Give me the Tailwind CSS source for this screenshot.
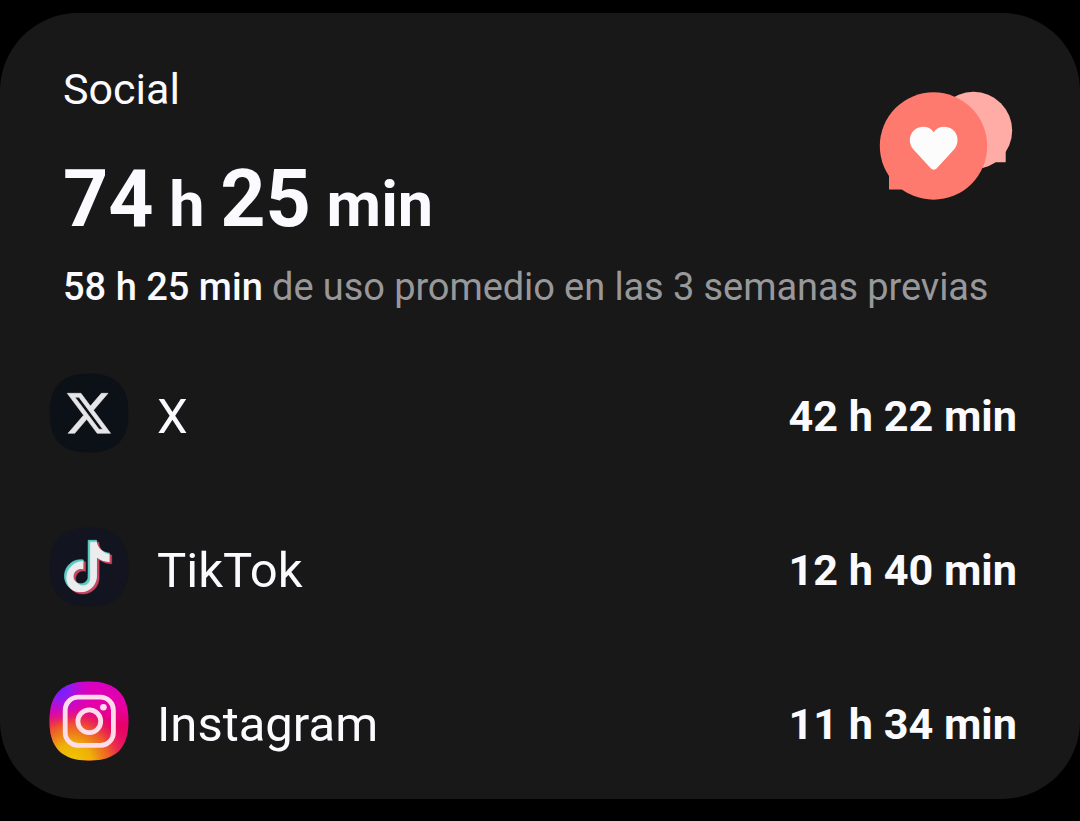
<!DOCTYPE html>
<html lang="es">
<head>
  <meta charset="UTF-8">
  <meta name="viewport" content="width=device-width, initial-scale=1.0">
  <title>Social</title>
  <script src="https://cdn.jsdelivr.net/npm/@tailwindcss/browser@4"></script>
</head>
<body class="bg-black h-screen overflow-hidden pt-[13px] font-['Roboto',sans-serif] text-[#fafaff]">

  <main class="h-[786px] rounded-[78px] bg-[#181818] pl-[49px] pr-[63px] overflow-hidden">

    <!-- Header -->
    <header class="flex justify-between h-[323px] pl-[14px]">
      <div class="pt-[51px] whitespace-nowrap">
        <h1 class="text-[43px] leading-[50px]">Social</h1>
        <p class="mt-[35px] text-[79px] leading-[100px] font-bold">74<span class="text-[63px]"> h </span>25<span class="text-[63px]"> min</span></p>
        <p class="mt-[7px] w-0 text-[38px] leading-[50px] text-[#98989a]"><span class="font-medium text-[#fafaff]">58 h 25 min</span><span class="tracking-[-0.09px]"> de uso promedio en las 3 semanas previas</span></p>
      </div>
      <svg class="mt-[77px] mr-[3px] w-[136px] h-[112px] shrink-0" viewBox="878 90 136 112">
        <circle cx="973.5" cy="130.5" r="38.7" fill="#ffaca6"/>
        <path d="M1005.7 140v22.3H985V140z" fill="#ffaca6"/>
        <circle cx="933.5" cy="146" r="53.7" fill="#ff7a6e"/>
        <path d="M889 165v24.6h25V165z" fill="#ff7a6e"/>
        <path d="M933.7 132.3C929.5 125.5 920.5 125.3 915 129.5C908.5 134.5 908.3 144 913.5 149.5L930.5 168C932.3 170.2 935.2 170.2 937 168L954 149.5C959 144 959 134.5 952.5 129.5C947 125.3 938 125.5 933.7 132.3z" fill="#fcfcfd"/>
      </svg>
    </header>

    <!-- Apps -->
    <ul>
      <li class="flex items-center h-[154px]">
        <svg class="w-[80px] h-[80px]" viewBox="0 0 80 80">
          <path d="M40 .5C67 .5 79.5 13 79.5 40S67 79.5 40 79.5.5 67 .5 40 13 .5 40 .5z" fill="#0c1117"/>
          <path transform="translate(15.7 15.7) scale(2.01 2.05)" d="M18.244 2.25h3.308l-7.227 8.26 8.502 11.24H16.17l-5.214-6.817L4.99 21.75H1.68l7.73-8.835L1.254 2.25H8.08l4.713 6.231zm-1.161 17.52h1.833L7.084 4.126H5.117z" fill="#e6e6e8" stroke="#e6e6e8" stroke-width="0.3"/>
        </svg>
        <span class="ml-[28px] mt-[7px] text-[49px] leading-[60px]">X</span>
        <span class="ml-auto mt-[7px] text-[43.2px] leading-[60px] font-bold">42 h 22 min</span>
      </li>
      <li class="flex items-center h-[154px]">
        <svg class="w-[80px] h-[80px]" viewBox="0 0 80 80">
          <defs>
            <path id="note" d="M12.525.02c1.31-.02 2.61-.01 3.91-.02.08 1.53.63 3.09 1.75 4.17 1.12 1.11 2.7 1.62 4.24 1.79v4.03c-1.44-.05-2.89-.35-4.2-.97-.57-.26-1.1-.59-1.62-.93-.01 2.92.01 5.84-.02 8.75-.08 1.4-.54 2.79-1.35 3.94-1.31 1.92-3.58 3.17-5.91 3.21-1.43.08-2.86-.31-4.08-1.03-2.02-1.19-3.44-3.37-3.65-5.71-.02-.5-.03-1-.01-1.49.18-1.9 1.12-3.72 2.58-4.96 1.66-1.44 3.98-2.13 6.15-1.72.02 1.48-.04 2.96-.04 4.44-.99-.32-2.15-.23-3.02.37-.63.41-1.11 1.04-1.36 1.75-.21.51-.15 1.07-.14 1.61.24 1.64 1.82 3.02 3.5 2.87 1.12-.01 2.19-.66 2.77-1.61.19-.33.4-.67.41-1.06.1-1.79.06-3.57.07-5.36.01-4.03-.01-8.05.02-12.07z"/>
            <clipPath id="overlap"><use href="#note" transform="translate(12.1 13.3) scale(2.16)"/></clipPath>
          </defs>
          <path d="M40 .5C67 .5 79.5 13 79.5 40S67 79.5 40 79.5.5 67 .5 40 13 .5 40 .5z" fill="#12151f"/>
          <use href="#note" transform="translate(12.1 13.3) scale(2.16)" fill="#5accc4" stroke="#5accc4" stroke-width="0.3"/>
          <use href="#note" transform="translate(14.3 15.2) scale(2.16)" fill="#cb4660" stroke="#cb4660" stroke-width="0.2"/>
          <!-- cyan inner edge stays above the red copy -->
          <g clip-path="url(#overlap)">
            <use href="#note" transform="translate(12.1 13.3) scale(2.16)" fill="#5accc4"/>
            <use href="#note" transform="translate(14.3 15.2) scale(2.16)" fill="#ececee" stroke="#ececee" stroke-width="0.3"/>
          </g>
        </svg>
        <span class="ml-[28px] mt-[7px] text-[49px] leading-[60px]">TikTok</span>
        <span class="ml-auto mt-[7px] text-[43.2px] leading-[60px] font-bold">12 h 40 min</span>
      </li>
      <li class="flex items-center h-[154px]">
        <svg class="w-[80px] h-[80px]" viewBox="0 0 80 80">
          <defs>
            <path id="tile" d="M40 .5C67 .5 79.5 13 79.5 40S67 79.5 40 79.5.5 67 .5 40 13 .5 40 .5z"/>
            <linearGradient id="ig-base" x1="0.45" y1="0" x2="0.55" y2="1">
              <stop offset="0" stop-color="#d800c4"/>
              <stop offset="0.35" stop-color="#e600a4"/>
              <stop offset="0.6" stop-color="#e80068"/>
              <stop offset="1" stop-color="#e62060"/>
            </linearGradient>
            <radialGradient id="ig-warm" cx="0.28" cy="1.05" r="0.76">
              <stop offset="0" stop-color="#f0cc00"/>
              <stop offset="0.35" stop-color="#eeb008"/>
              <stop offset="0.66" stop-color="#ee6024" stop-opacity="0.9"/>
              <stop offset="1" stop-color="#ea1060" stop-opacity="0"/>
            </radialGradient>
            <radialGradient id="ig-violet" cx="0.12" cy="0.08" r="0.45">
              <stop offset="0" stop-color="#6a20ff"/>
              <stop offset="0.3" stop-color="#8c1cf4"/>
              <stop offset="1" stop-color="#dc00c4" stop-opacity="0"/>
            </radialGradient>
          </defs>
          <use href="#tile" fill="url(#ig-base)"/>
          <use href="#tile" fill="url(#ig-warm)"/>
          <use href="#tile" fill="url(#ig-violet)"/>
          <g fill="none" stroke="#ffdcea" stroke-width="4.8">
            <rect x="16.2" y="16.2" width="48.2" height="48.2" rx="13"/>
            <circle cx="40.3" cy="40.3" r="11.4"/>
          </g>
          <circle cx="54.4" cy="26.2" r="3.3" fill="#ffdcea"/>
        </svg>
        <span class="ml-[28px] mt-[7px] text-[49px] leading-[60px]">Instagram</span>
        <span class="ml-auto mt-[7px] text-[43.2px] leading-[60px] font-bold">11 h 34 min</span>
      </li>
    </ul>

  </main>

</body>
</html>
